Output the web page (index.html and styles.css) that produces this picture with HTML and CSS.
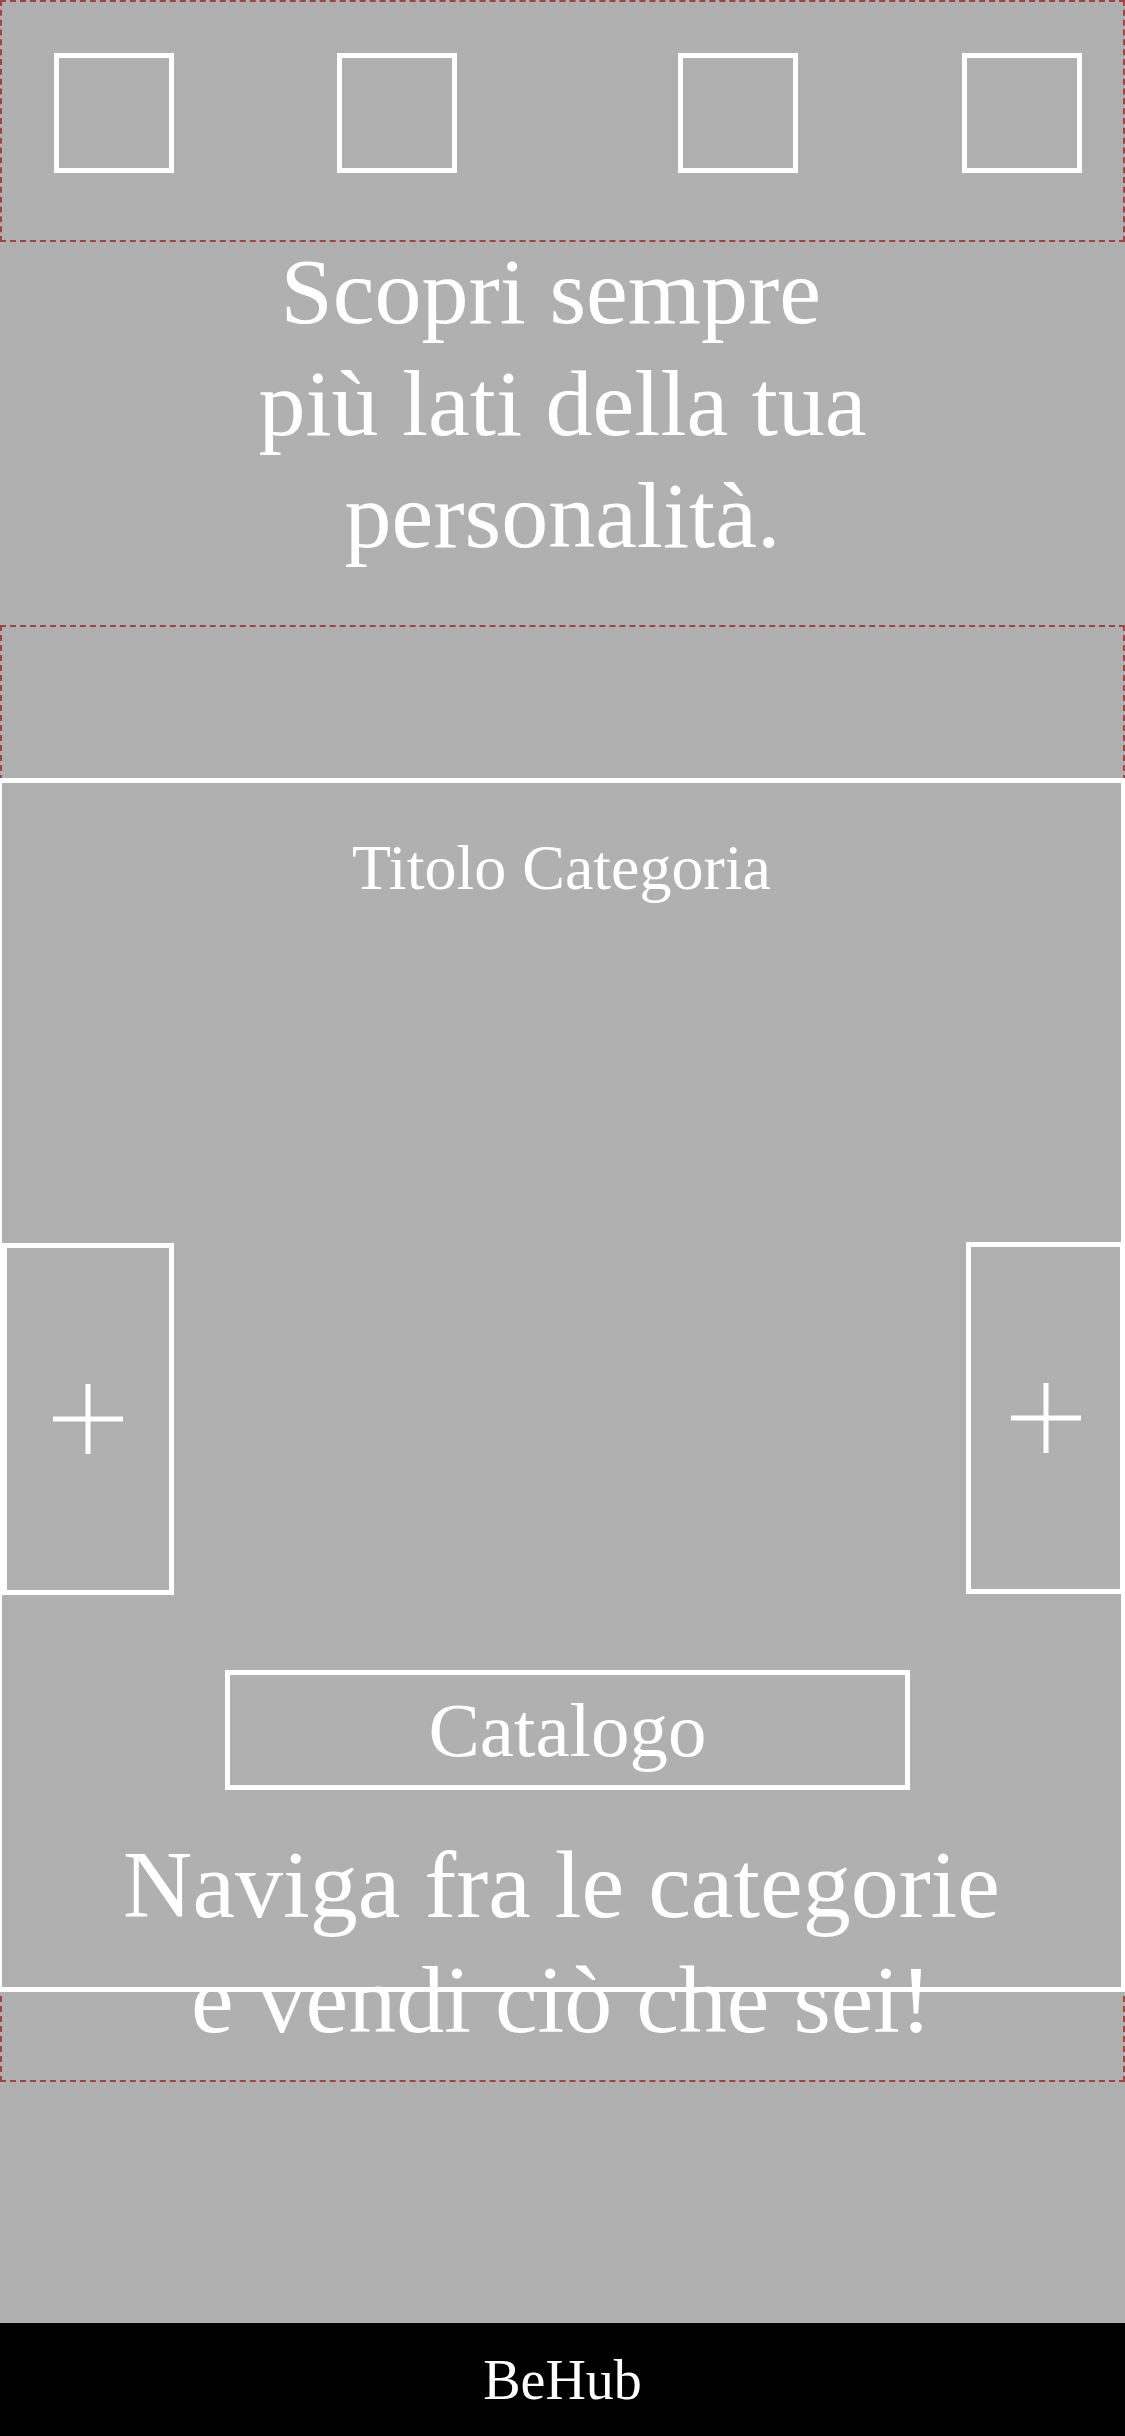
FILE: index.html
```html
<!DOCTYPE html>
<html lang="it">
<head>
<meta charset="utf-8">
<title>BeHub</title>
<link rel="stylesheet" href="styles.css">
</head>
<body>
  <header class="top-bar">
    <div class="thumb"></div>
    <div class="thumb thumb-2"></div>
    <div class="thumb thumb-3"></div>
    <div class="thumb thumb-4"></div>
  </header>

  <section class="hero">
    <h1 class="hero-title">Scopri sempre&nbsp;<br>più lati della tua personalità.</h1>
  </section>

  <section class="showcase">
    <div class="category-card">
      <h2 class="category-title">Titolo Categoria</h2>
      <div class="slider-row">
        <button class="slide-btn prev" type="button" aria-label="Precedente">
          <svg class="plus-icon" viewBox="0 0 70 70" width="70" height="70"><path d="M35 0V70M0 35H70" stroke="#fff" stroke-width="5" fill="none"/></svg>
        </button>
        <button class="slide-btn next" type="button" aria-label="Successivo">
          <svg class="plus-icon" viewBox="0 0 70 70" width="70" height="70"><path d="M35 0V70M0 35H70" stroke="#fff" stroke-width="5" fill="none"/></svg>
        </button>
      </div>
      <a class="catalog-btn" href="#">Catalogo</a>
      <p class="tagline">Naviga fra le categorie e vendi ciò che sei!</p>
    </div>
  </section>

  <footer class="site-footer">BeHub</footer>
</body>
</html>
```
FILE: styles.css
```css
* {
  box-sizing: border-box;
}

html,
body {
  margin: 0;
  padding: 0;
  overflow-x: hidden;
}

body {
  min-height: 2436px;
  display: flex;
  flex-direction: column;
  background: #b0b0b0;
  color: #fff;
  font-family: "Liberation Serif", "Times New Roman", serif;
}

body > * {
  flex-shrink: 0;
}

/* top bar with four thumbnails */
.top-bar {
  height: 242px;
  border: 2px dashed #a14343;
  display: flex;
  align-items: flex-start;
  padding: 51px 0 0 52px;
}

.thumb {
  flex: none;
  width: 120px;
  height: 120px;
  border: 5px solid #fff;
}

.thumb-2 {
  margin-left: 163px;
}

.thumb-3 {
  margin-left: 221px;
}

.thumb-4 {
  margin-left: 164px;
}

/* hero */
.hero {
  height: 383px;
}

.hero-title {
  max-width: 660px;
  margin: -7px auto 0;
  font-size: 94px;
  line-height: 112px;
  font-weight: normal;
  text-align: center;
}

/* showcase */
.showcase {
  border: 2px dashed #a14343;
  padding: 151px 0 88px;
}

.category-card {
  height: 1214px;
  margin: 0 -3px 0 -5px;
  border: 5px solid #fff;
  display: flex;
  flex-direction: column;
}

.category-card > * {
  flex-shrink: 0;
}

.category-title {
  margin: 48px 0 0;
  font-size: 64px;
  line-height: 74px;
  font-weight: normal;
  text-align: center;
}

.slider-row {
  display: flex;
  justify-content: space-between;
  align-items: flex-start;
  margin-top: 338px;
}

.slide-btn {
  flex: none;
  height: 352px;
  padding: 0;
  border: 5px solid #fff;
  background: transparent;
  display: flex;
  align-items: center;
  justify-content: center;
  cursor: pointer;
}

.slide-btn.prev {
  width: 172px;
}

.slide-btn.next {
  width: 159px;
  margin-top: -1px;
  margin-right: -4px;
}

.plus-icon {
  display: block;
}

.catalog-btn {
  align-self: flex-start;
  width: 685px;
  height: 120px;
  margin: 75px 0 0 223px;
  border: 5px solid #fff;
  display: flex;
  align-items: center;
  justify-content: center;
  color: #fff;
  text-decoration: none;
  font-size: 77px;
}

.tagline {
  width: 910px;
  margin: 37px auto 0;
  font-size: 96px;
  line-height: 115px;
  text-align: center;
}

/* footer */
.site-footer {
  margin-top: auto;
  height: 113px;
  background: #000;
  display: flex;
  align-items: center;
  justify-content: center;
  font-size: 56px;
}
```
